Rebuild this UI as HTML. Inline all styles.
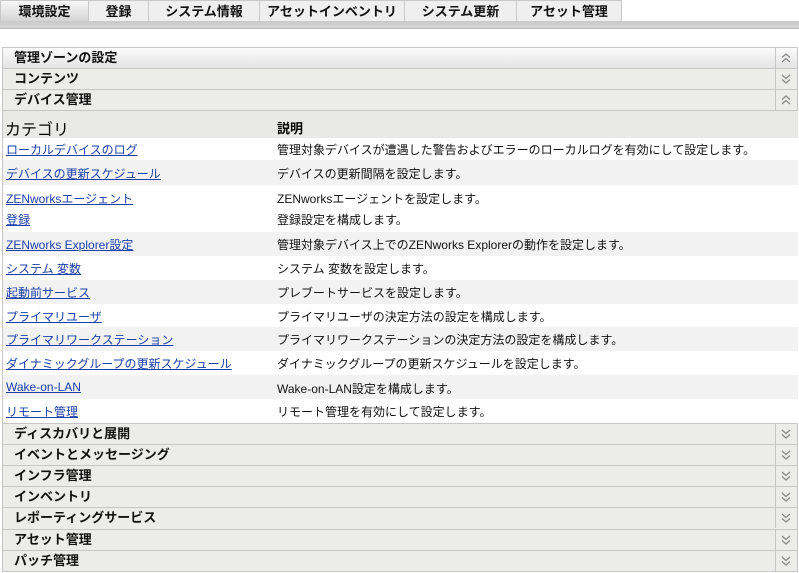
<!DOCTYPE html>
<html><head><meta charset="utf-8"><style>
body{margin:0;width:799px;height:573px;background:#fff;font-family:"Liberation Sans","Noto Sans CJK JP",sans-serif;position:relative;overflow:hidden}
.tabs{position:absolute;left:0;top:0;width:799px;height:22px;background:#fff}
.tab{position:absolute;top:0;height:21px;border:1px solid #c8c8c8;border-bottom:none;background:#efefef;font-size:13px;font-weight:bold;line-height:22px;text-align:center;color:#111;box-sizing:border-box}
.tab.sel{background:linear-gradient(#f8f8f8,#d4d4d4)}
.bar{position:absolute;left:0;top:21px;width:799px;height:7px;background:linear-gradient(#c8c8c8,#d8d8d8);border-bottom:1px solid #b8b8b8}
.hd{position:absolute;left:2px;width:796px;height:21px;box-sizing:border-box;border:1px solid #c6c6c6;border-bottom:none;background:#ececea;font-size:13px;font-weight:bold;line-height:20px;padding-left:11px;color:#111}
.hd.top{background:linear-gradient(#fbfbfb,#e4e4e4)}
.hd .ar{position:absolute;right:0;top:0;width:21px;height:20px;border-left:1px solid #c6c6c6}
.hd .ar svg{position:absolute;left:5px;top:4px}
.row{position:absolute;left:2px;width:796px;border-left:1px solid #c6c6c6;box-sizing:border-box;font-size:12px}
.row a{position:absolute;left:3px;color:#1a3fa8;text-decoration:underline}
.row span{position:absolute;left:274px;color:#111}
.g{background:#f2f2f2}
</style></head><body>
<svg width="0" height="0" style="position:absolute">
<defs>
<symbol id="dn" viewBox="0 0 10 12"><path d="M1 2 L5 5.5 L9 2 M1 6.5 L5 10 L9 6.5" fill="none" stroke="#8a8a8a" stroke-width="1.3"/></symbol>
<symbol id="up" viewBox="0 0 10 12"><path d="M1 5.5 L5 2 L9 5.5 M1 10 L5 6.5 L9 10" fill="none" stroke="#8a8a8a" stroke-width="1.3"/></symbol>
</defs></svg>
<div class="tabs">
<div class="tab sel" style="left:0;width:89px">環境設定</div>
<div class="tab" style="left:88px;width:61px">登録</div>
<div class="tab" style="left:148px;width:112px">システム情報</div>
<div class="tab" style="left:259px;width:146px">アセットインベントリ</div>
<div class="tab" style="left:404px;width:113px">システム更新</div>
<div class="tab" style="left:516px;width:106px">アセット管理</div>
</div>
<div class="bar"></div>

<div class="hd top" style="top:47px">管理ゾーンの設定<div class="ar"><svg width="10" height="12"><use href="#up"/></svg></div></div>
<div class="hd" style="top:68px">コンテンツ<div class="ar"><svg width="10" height="12"><use href="#dn"/></svg></div></div>
<div class="hd" style="top:89px">デバイス管理<div class="ar"><svg width="10" height="12"><use href="#up"/></svg></div></div>
<div style="position:absolute;left:2px;top:110px;width:796px;height:28px;background:#e9e9e7;border-top:1px solid #c6c6c6;border-left:1px solid #c6c6c6;box-sizing:border-box"><div style="position:absolute;left:2px;top:5px;font-size:16px">カテゴリ</div><div style="position:absolute;left:274px;top:7px;font-size:13px;font-weight:bold">説明</div></div>

<div class="row" style="top:138px;height:22px"><a style="top:3px">ローカルデバイスのログ</a><span style="top:3px">管理対象デバイスが遭遇した警告およびエラーのローカルログを有効にして設定します。</span></div>
<div class="row g" style="top:160px;height:25px"><a style="top:5px">デバイスの更新スケジュール</a><span style="top:5px">デバイスの更新間隔を設定します。</span></div>
<div class="row" style="top:185px;height:47px"><a style="top:5px">ZENworksエージェント</a><span style="top:5px">ZENworksエージェントを設定します。</span><a style="top:26px">登録</a><span style="top:26px">登録設定を構成します。</span></div>
<div class="row g" style="top:232px;height:24px"><a style="top:4px">ZENworks Explorer設定</a><span style="top:4px">管理対象デバイス上でのZENworks Explorerの動作を設定します。</span></div>
<div class="row" style="top:256px;height:24px"><a style="top:4px">システム 変数</a><span style="top:4px">システム 変数を設定します。</span></div>
<div class="row g" style="top:280px;height:24px"><a style="top:4px">起動前サービス</a><span style="top:4px">プレブートサービスを設定します。</span></div>
<div class="row" style="top:304px;height:23px"><a style="top:4px">プライマリユーザ</a><span style="top:4px">プライマリユーザの決定方法の設定を構成します。</span></div>
<div class="row g" style="top:327px;height:24px"><a style="top:4px">プライマリワークステーション</a><span style="top:4px">プライマリワークステーションの決定方法の設定を構成します。</span></div>
<div class="row" style="top:351px;height:24px"><a style="top:4px">ダイナミックグループの更新スケジュール</a><span style="top:4px">ダイナミックグループの更新スケジュールを設定します。</span></div>
<div class="row g" style="top:375px;height:24px"><a style="top:5px">Wake-on-LAN</a><span style="top:5px">Wake-on-LAN設定を構成します。</span></div>
<div class="row" style="top:399px;height:24px"><a style="top:4px">リモート管理</a><span style="top:4px">リモート管理を有効にして設定します。</span></div>

<div class="hd" style="top:423px">ディスカバリと展開<div class="ar"><svg width="10" height="12"><use href="#dn"/></svg></div></div>
<div class="hd" style="top:444px">イベントとメッセージング<div class="ar"><svg width="10" height="12"><use href="#dn"/></svg></div></div>
<div class="hd" style="top:465px">インフラ管理<div class="ar"><svg width="10" height="12"><use href="#dn"/></svg></div></div>
<div class="hd" style="top:486px">インベントリ<div class="ar"><svg width="10" height="12"><use href="#dn"/></svg></div></div>
<div class="hd" style="top:507px;height:22px">レポーティングサービス<div class="ar"><svg width="10" height="12"><use href="#dn"/></svg></div></div>
<div class="hd" style="top:529px">アセット管理<div class="ar"><svg width="10" height="12"><use href="#dn"/></svg></div></div>
<div class="hd" style="top:550px;border-bottom:1px solid #c6c6c6;height:22px">パッチ管理<div class="ar"><svg width="10" height="12"><use href="#dn"/></svg></div></div>
</body></html>
